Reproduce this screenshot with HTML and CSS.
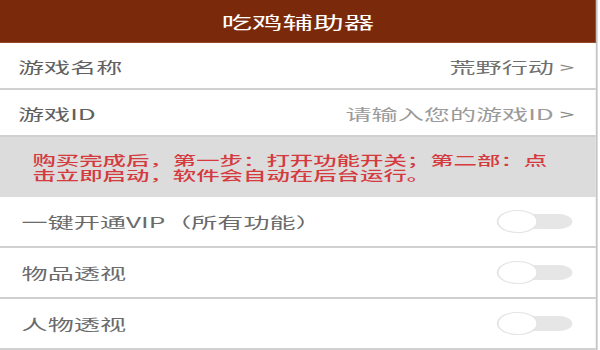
FILE: index.html
```html
<!DOCTYPE html>
<html lang="zh-CN">
<head>
<meta charset="utf-8">
<title>吃鸡辅助器</title>
<link rel="stylesheet" href="styles.css">
</head>
<body>
<div class="app">
  <header class="header">吃鸡辅助器</header>
  <div class="row">
    <span class="label">游戏名称</span>
    <span class="value">荒野行动 <span class="arrow">&gt;</span></span>
  </div>
  <div class="row">
    <span class="label">游戏ID</span>
    <span class="value placeholder">请输入您的游戏ID <span class="arrow">&gt;</span></span>
  </div>
  <div class="notice">购买完成后，第一步：打开功能开关；第二部：点击立即启动，软件会自动在后台运行。</div>
  <div class="row switch-row">
    <span class="label">一键开通VIP（所有功能）</span>
    <span class="toggle"><span class="knob"></span></span>
  </div>
  <div class="row switch-row">
    <span class="label">物品透视</span>
    <span class="toggle"><span class="knob"></span></span>
  </div>
  <div class="row switch-row">
    <span class="label">人物透视</span>
    <span class="toggle"><span class="knob"></span></span>
  </div>
</div>
</body>
</html>
```
FILE: styles.css
```css
* { box-sizing: border-box; }
html, body {
  margin: 0;
  padding: 0;
  background: #ffffff;
  overflow: hidden;
}
body {
  font-family: "Noto Sans CJK SC", "Noto Sans", sans-serif;
}
.app {
  width: 332px;
  min-height: 360px;
  border-right: 1px solid #c4c4c4;
  background: #ffffff;
  transform: scaleX(1.8);
  transform-origin: 0 0;
}
.header {
  height: 43px;
  background: #7a2a0b;
  color: #ffffff;
  font-size: 17px;
  display: flex;
  align-items: center;
  justify-content: center;
  border-bottom: 1px solid #9a4a2a;
}
.row {
  height: 47px;
  display: flex;
  align-items: center;
  justify-content: space-between;
  padding: 1px 12px 0 10px;
  border-bottom: 2px solid #d0d0d0;
  font-size: 14.5px;
}
.label {
  color: #606060;
}
.value {
  color: #707070;
}
.value.placeholder {
  color: #9a9a9a;
}
.arrow {
  color: #8a8a8a;
}
.notice {
  height: 60px;
  background: #dcdcdc;
  color: #d43a3e;
  font-size: 13px;
  line-height: 15px;
  font-weight: 500;
  padding: 15px 24px 0 18px;
}
.switch-row {
  height: 51px;
  padding: 0 13px 0 12px;
}
.switch-row .label {
  color: #6a6a6a;
}
.toggle {
  position: relative;
  width: 42px;
  height: 15px;
  border-radius: 8px;
  background: #e6e6e6;
}
.knob {
  position: absolute;
  left: 0;
  top: -4px;
  width: 23px;
  height: 23px;
  border-radius: 50%;
  background: #ffffff;
  border: 1px solid #e4e4e4;
}
```
